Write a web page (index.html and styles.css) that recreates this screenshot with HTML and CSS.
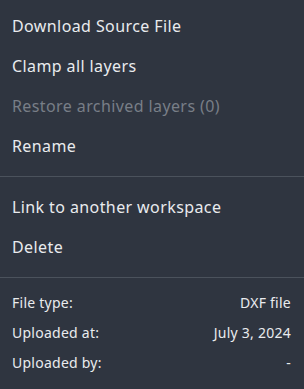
FILE: index.html
```html
<!DOCTYPE html>
<html lang="en">

<head>
  <meta charset="UTF-8" />
  <meta name="viewport" content="width=device-width, initial-scale=1.0" />
  <title>File menu</title>
  <link rel="stylesheet" href="styles.css">
</head>

<body>
  <div class="menu">
    <ul class="secao primeira">
      <li class="item">Download Source File</li>
      <li class="item">Clamp all layers</li>
      <li class="item desabilitado">Restore archived layers (0)</li>
      <li class="item">Rename</li>
    </ul>

    <ul class="secao">
      <li class="item">Link to another workspace</li>
      <li class="item">Delete</li>
    </ul>

    <dl class="info">
      <div class="linha">
        <dt>File type:</dt>
        <dd>DXF file</dd>
      </div>
      <div class="linha">
        <dt>Uploaded at:</dt>
        <dd>July 3, 2024</dd>
      </div>
      <div class="linha">
        <dt>Uploaded by:</dt>
        <dd>-</dd>
      </div>
    </dl>
  </div>
</body>

</html>
```

FILE: styles.css
```css
body {
  margin: 0;
  background-color: #2f3540;
  font-family: "Noto Sans", sans-serif;
  color: #e9ebee;
}

.menu {
  width: 304px;
  height: 389px;
  overflow: hidden;
}

.secao {
  list-style: none;
  margin: 0;
  padding: 10px 0;
  border-bottom: 1px solid #4b525c;
}

.primeira {
  padding-top: 6px;
}

.item {
  height: 40px;
  line-height: 40px;
  padding: 0 12px;
  font-size: 16px;
  letter-spacing: 0.4px;
  cursor: pointer;
}

.desabilitado {
  color: #787e87;
  cursor: default;
}

.info {
  margin: 0;
  padding: 10px 13px 10px 12px;
}

.linha {
  display: flex;
  justify-content: space-between;
  height: 30px;
  line-height: 30px;
  font-size: 14px;
  letter-spacing: 0.25px;
}

.info dt,
.info dd {
  margin: 0;
}
```
